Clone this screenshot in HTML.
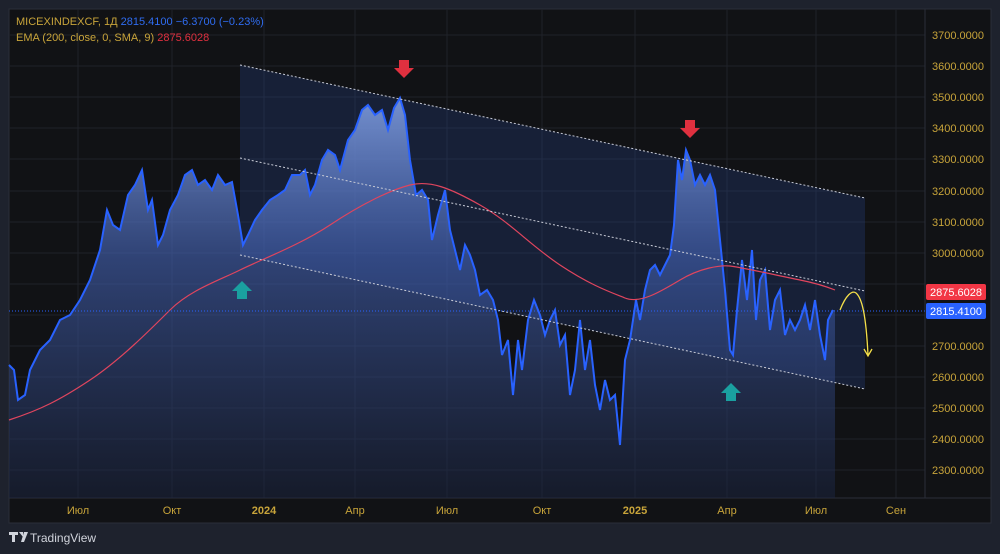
<!DOCTYPE html>
<html><head><meta charset="utf-8"><style>
html,body{margin:0;padding:0;background:#1e222d;width:1000px;height:554px;overflow:hidden;font-family:"Liberation Sans",sans-serif}
svg{position:absolute;left:0;top:0}
</style></head><body>
<svg width="1000" height="554" viewBox="0 0 1000 554" xmlns="http://www.w3.org/2000/svg" font-family="Liberation Sans, sans-serif">
<defs>
<linearGradient id="ar" x1="0" y1="0" x2="0" y2="1">
<stop offset="0" stop-color="#7f9de0" stop-opacity="0.9"/>
<stop offset="0.4" stop-color="#4463b5" stop-opacity="0.6"/>
<stop offset="1" stop-color="#1a2440" stop-opacity="0.5"/>
</linearGradient>
<path id="p" fill="none" d="M9,365 L14,370 L18,400 L25,395 L30,370 L40,350 L50,340 L60,320 L70,315 L80,300 L90,280 L100,250 L107,210 L113,225 L120,230 L128,195 L135,185 L142,170 L148,210 L152,200 L158,245 L163,235 L170,210 L178,195 L185,175 L192,170 L198,185 L205,180 L212,190 L218,175 L225,185 L232,182 L238,215 L243,245 L248,235 L255,220 L262,210 L270,200 L278,195 L285,190 L292,175 L300,175 L305,170 L310,195 L315,185 L322,160 L328,150 L335,155 L340,170 L348,140 L355,130 L362,110 L368,105 L375,115 L382,110 L388,130 L394,108 L400,98 L405,115 L410,160 L416,195 L422,190 L428,200 L432,240 L438,215 L445,190 L450,230 L455,250 L460,270 L465,245 L470,255 L475,270 L480,295 L487,290 L493,300 L498,320 L502,355 L508,340 L513,395 L518,340 L522,370 L528,320 L534,300 L540,315 L545,335 L550,320 L555,310 L560,345 L565,335 L570,395 L575,370 L580,320 L585,370 L590,340 L595,385 L600,410 L605,380 L610,400 L615,395 L620,445 L625,360 L630,340 L636,300 L640,320 L645,290 L650,270 L655,265 L660,275 L665,265 L670,255 L674,225 L678,160 L682,180 L686,150 L690,160 L695,185 L700,175 L705,185 L710,175 L715,190 L720,240 L725,290 L730,350 L733,355 L737,310 L742,260 L747,300 L752,250 L756,320 L760,280 L765,270 L770,330 L775,300 L780,290 L785,335 L790,320 L795,330 L800,320 L805,305 L810,330 L815,300 L820,335 L825,360 L828,320 L833,310"/>
</defs>
<rect x="9" y="9" width="982" height="514" fill="#111215" stroke="#2a2e39"/>
<g stroke="#1f2229" stroke-width="1">
<line x1="9" y1="35" x2="925" y2="35"/><line x1="9" y1="66" x2="925" y2="66"/><line x1="9" y1="97" x2="925" y2="97"/><line x1="9" y1="128" x2="925" y2="128"/><line x1="9" y1="159" x2="925" y2="159"/><line x1="9" y1="191" x2="925" y2="191"/><line x1="9" y1="222" x2="925" y2="222"/><line x1="9" y1="253" x2="925" y2="253"/><line x1="9" y1="284" x2="925" y2="284"/><line x1="9" y1="315" x2="925" y2="315"/><line x1="9" y1="346" x2="925" y2="346"/><line x1="9" y1="377" x2="925" y2="377"/><line x1="9" y1="408" x2="925" y2="408"/><line x1="9" y1="439" x2="925" y2="439"/><line x1="9" y1="470" x2="925" y2="470"/>
<line x1="78" y1="9" x2="78" y2="498"/><line x1="172" y1="9" x2="172" y2="498"/><line x1="264" y1="9" x2="264" y2="498"/><line x1="355" y1="9" x2="355" y2="498"/><line x1="447" y1="9" x2="447" y2="498"/><line x1="542" y1="9" x2="542" y2="498"/><line x1="635" y1="9" x2="635" y2="498"/><line x1="727" y1="9" x2="727" y2="498"/><line x1="816" y1="9" x2="816" y2="498"/><line x1="896" y1="9" x2="896" y2="498"/>
</g>
<line x1="9" y1="498" x2="991" y2="498" stroke="#2a2e39"/>
<line x1="925" y1="9" x2="925" y2="498" stroke="#2a2e39"/>
<polygon points="240,65 865,198 865,389 240,255" fill="#2a4aa0" fill-opacity="0.25"/>
<path d="M9,365 L14,370 L18,400 L25,395 L30,370 L40,350 L50,340 L60,320 L70,315 L80,300 L90,280 L100,250 L107,210 L113,225 L120,230 L128,195 L135,185 L142,170 L148,210 L152,200 L158,245 L163,235 L170,210 L178,195 L185,175 L192,170 L198,185 L205,180 L212,190 L218,175 L225,185 L232,182 L238,215 L243,245 L248,235 L255,220 L262,210 L270,200 L278,195 L285,190 L292,175 L300,175 L305,170 L310,195 L315,185 L322,160 L328,150 L335,155 L340,170 L348,140 L355,130 L362,110 L368,105 L375,115 L382,110 L388,130 L394,108 L400,98 L405,115 L410,160 L416,195 L422,190 L428,200 L432,240 L438,215 L445,190 L450,230 L455,250 L460,270 L465,245 L470,255 L475,270 L480,295 L487,290 L493,300 L498,320 L502,355 L508,340 L513,395 L518,340 L522,370 L528,320 L534,300 L540,315 L545,335 L550,320 L555,310 L560,345 L565,335 L570,395 L575,370 L580,320 L585,370 L590,340 L595,385 L600,410 L605,380 L610,400 L615,395 L620,445 L625,360 L630,340 L636,300 L640,320 L645,290 L650,270 L655,265 L660,275 L665,265 L670,255 L674,225 L678,160 L682,180 L686,150 L690,160 L695,185 L700,175 L705,185 L710,175 L715,190 L720,240 L725,290 L730,350 L733,355 L737,310 L742,260 L747,300 L752,250 L756,320 L760,280 L765,270 L770,330 L775,300 L780,290 L785,335 L790,320 L795,330 L800,320 L805,305 L810,330 L815,300 L820,335 L825,360 L828,320 L833,310 L835,310 L835,498 L9,498 Z" fill="url(#ar)"/>
<use href="#p" stroke="#2962ff" stroke-width="2"/>
<path d="M9,420 C40,410 60,400 90,380 S150,330 170,310 S220,280 240,270 S300,245 330,225 S390,190 410,185 S450,188 480,205 S530,245 560,265 S610,292 625,298 S660,292 680,280 S720,265 730,266 S780,276 800,280 S830,288 835,290" fill="none" stroke="#e0455e" stroke-width="1.2"/>
<g stroke="#c8cbd6" stroke-width="1" stroke-dasharray="2,2" fill="none">
<line x1="240" y1="65" x2="865" y2="198"/><line x1="240" y1="158" x2="865" y2="291"/><line x1="240" y1="255" x2="865" y2="389"/>
</g>
<line x1="9" y1="311" x2="925" y2="311" stroke="#2962ff" stroke-dasharray="1,2"/>
<path d="M399,60 h10 v8 h5 l-10,10 l-10,-10 h5 z" fill="#e0303f"/>
<path d="M685,120 h10 v8 h5 l-10,10 l-10,-10 h5 z" fill="#e0303f"/>
<path d="M242,281 l10,10 h-5 v8 h-10 v-8 h-5 z" fill="#1aa0a0"/>
<path d="M731,383 l10,10 h-5 v8 h-10 v-8 h-5 z" fill="#1aa0a0"/>
<path d="M840,310 C846,295 852,290 856,293 C862,298 866,315 868,355" fill="none" stroke="#f5e04a" stroke-width="1.3"/>
<path d="M864,349 L868,356 L872,349" fill="none" stroke="#f5e04a" stroke-width="1.3"/>
<g fill="#c8a43a" font-size="11">
<text x="932" y="39">3700.0000</text><text x="932" y="70">3600.0000</text><text x="932" y="101">3500.0000</text><text x="932" y="132">3400.0000</text><text x="932" y="163">3300.0000</text><text x="932" y="195">3200.0000</text><text x="932" y="226">3100.0000</text><text x="932" y="257">3000.0000</text><text x="932" y="350">2700.0000</text><text x="932" y="381">2600.0000</text><text x="932" y="412">2500.0000</text><text x="932" y="443">2400.0000</text><text x="932" y="474">2300.0000</text>
<text x="78" y="514" text-anchor="middle">Июл</text><text x="172" y="514" text-anchor="middle">Окт</text><text x="264" y="514" text-anchor="middle" font-weight="bold">2024</text><text x="355" y="514" text-anchor="middle">Апр</text><text x="447" y="514" text-anchor="middle">Июл</text><text x="542" y="514" text-anchor="middle">Окт</text><text x="635" y="514" text-anchor="middle" font-weight="bold">2025</text><text x="727" y="514" text-anchor="middle">Апр</text><text x="816" y="514" text-anchor="middle">Июл</text><text x="896" y="514" text-anchor="middle">Сен</text>
</g>
<rect x="926" y="284" width="60" height="16" rx="2" fill="#f23645"/>
<text x="956" y="296" fill="#fff" font-size="11" text-anchor="middle">2875.6028</text>
<rect x="926" y="303" width="60" height="16" rx="2" fill="#2962ff"/>
<text x="956" y="315" fill="#fff" font-size="11" text-anchor="middle">2815.4100</text>
<g font-size="11">
<text x="16" y="25" fill="#c8a43a">MICEXINDEXCF, 1Д <tspan fill="#2f6cf0">2815.4100  −6.3700 (−0.23%)</tspan></text>
<text x="16" y="41" fill="#c8a43a">EMA (200, close, 0, SMA, 9) <tspan fill="#e0303f">2875.6028</tspan></text>
</g>
<path d="M9,532 h9 v3 h-3 v7 h-3 v-7 h-3 z M19,532 h4 v5 z M24,532 h4 l-4,10 h-3 z" fill="#d1d4dc"/>
<text x="30" y="542" fill="#d1d4dc" font-size="12">TradingView</text>
</svg>
</body></html>
